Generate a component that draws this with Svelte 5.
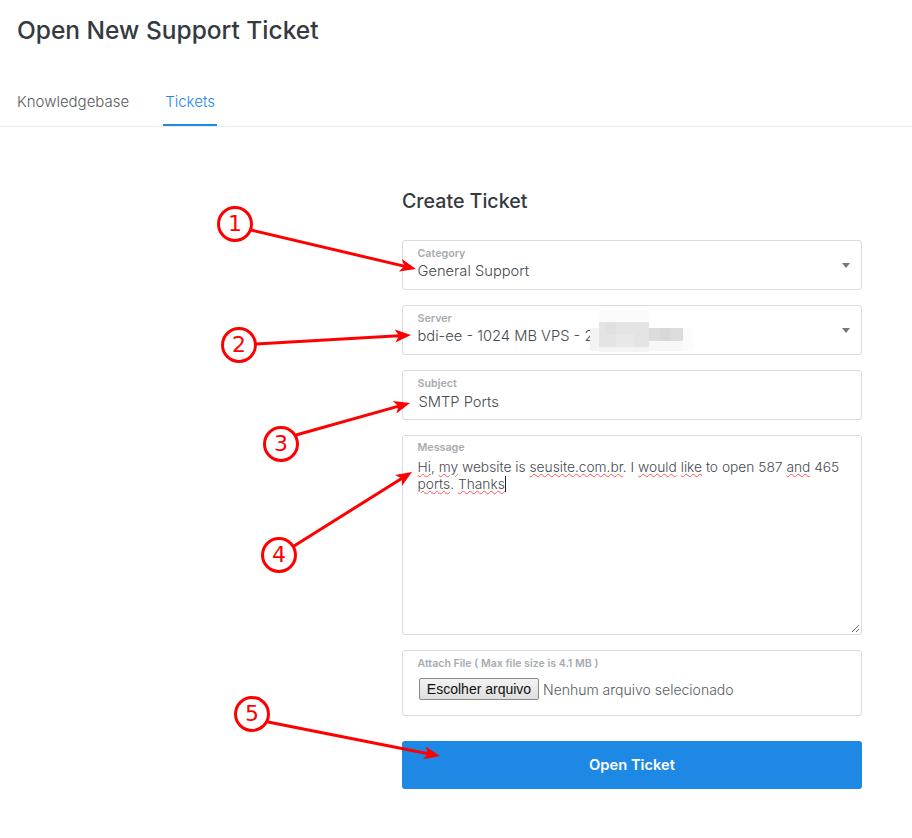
<script>
  const blur = [
    [590, 328, 9, 23, '#f3f3f3'], [599, 322, 50, 25, '#e4e4e4'], [599, 347, 50, 5, '#f4f4f4'],
    [599, 310, 50, 12, '#fbfbfb'], [606, 322, 10, 12, '#e0e0e0'], [616, 334, 18, 13, '#e8e8e8'],
    [649, 328, 34, 13, '#dcdcdc'], [660, 328, 10, 13, '#d8d8d8'], [649, 341, 34, 10, '#f7f7f7'],
    [683, 328, 10, 23, '#fbfbfb']
  ];

  const arrows = [
    { n: 1, cx: 235, cy: 224, x1: 251, y1: 230, x2: 416, y2: 269 },
    { n: 2, cx: 239, cy: 345, x1: 256, y1: 344, x2: 411, y2: 335 },
    { n: 3, cx: 281, cy: 444, x1: 296, y1: 435, x2: 410, y2: 403 },
    { n: 4, cx: 279, cy: 555, x1: 294, y1: 546, x2: 412, y2: 472 },
    { n: 5, cx: 252, cy: 714, x1: 268, y1: 722, x2: 440, y2: 756 }
  ];

  const angle = (a) => Math.atan2(a.y2 - a.y1, a.x2 - a.x1);

  // arrow head polygon, pointing along the line
  function head(a) {
    const ang = angle(a);
    const pt = (d, s) => {
      const x = a.x2 - d * Math.cos(ang) - s * Math.sin(ang);
      const y = a.y2 - d * Math.sin(ang) + s * Math.cos(ang);
      return `${x.toFixed(1)},${y.toFixed(1)}`;
    };
    return `${a.x2},${a.y2} ${pt(16, 6.5)} ${pt(12, 0)} ${pt(16, -6.5)}`;
  }
</script>

<div class="page">
  <header>
    <h1>Open New Support Ticket</h1>
    <nav>
      <a href="#kb">Knowledgebase</a>
      <a href="#tickets" class="active">Tickets</a>
    </nav>
  </header>

  <form on:submit|preventDefault>
    <h2>Create Ticket</h2>

    <div class="field select">
      <span class="label">Category</span>
      <span class="value">General Support</span>
      <i class="caret"></i>
    </div>

    <div class="field select">
      <span class="label">Server</span>
      <span class="value">bdi-ee - 1024 MB VPS - 2</span>
      <i class="caret"></i>
    </div>

    <div class="field subject">
      <span class="label">Subject</span>
      <span class="value">SMTP Ports</span>
    </div>

    <div class="field message">
      <span class="label">Message</span>
      <p>
        <u>Hi</u>, <u>my</u> website is <u>seusite.com.br</u>. I <u>would</u> <u>like</u> to open 587 <u>and</u> 465
        <u>ports</u>. <u>Thanks</u><b class="cursor"></b>
      </p>
      <svg class="grip" width="9" height="9" viewBox="0 0 9 9">
        <path d="M1 8 8 1M5 8 8 5" stroke="#666" fill="none" />
      </svg>
    </div>

    <div class="field attach">
      <span class="label">Attach File ( Max file size is 4.1 MB )</span>
      <div class="file">
        <button type="button">Escolher arquivo</button>
        <span>Nenhum arquivo selecionado</span>
      </div>
    </div>

    <button class="submit" type="submit">Open Ticket</button>
  </form>

  <svg class="overlay" width="912" height="838" viewBox="0 0 912 838">
    {#each blur as [x, y, w, h, fill]}
      <rect {x} {y} width={w} height={h} {fill} />
    {/each}
    {#each arrows as a}
      <line x1={a.x1} y1={a.y1} x2={a.x2 - 8 * Math.cos(angle(a))} y2={a.y2 - 8 * Math.sin(angle(a))} stroke="#f00" stroke-width="3" />
      <polygon points={head(a)} fill="#f00" />
      <circle cx={a.cx} cy={a.cy} r="16.5" fill="#fff" stroke="#f00" stroke-width="3" />
      <text x={a.cx} y={a.cy + 7} text-anchor="middle">{a.n}</text>
    {/each}
  </svg>
</div>

<style>
  :global(body) {
    margin: 0;
    background: #fff;
    font-family: "Inter", "Lato", sans-serif;
    color: #555b61;
  }

  .page { position: relative; height: 838px; overflow: hidden; }

  header { height: 126px; border-bottom: 1px solid #e9ecef; padding-left: 17px; }
  h1 {
    margin: 0; padding-top: 16px;
    font-size: 24.5px; line-height: 29px; font-weight: 500; color: #343a40;
  }

  nav { display: flex; gap: 34px; margin-top: 33px; }
  nav a {
    display: block; padding: 0 2px; height: 48px; line-height: 47px; margin-left: -2px;
    font-size: 15px; font-weight: 300; color: #555b61; text-decoration: none; box-sizing: border-box;
  }
  nav a.active { color: #1e88e5; border-bottom: 2px solid #1e88e5; }

  form { width: 460px; margin-left: 402px; display: flex; flex-direction: column; }
  h2 {
    margin: 61px 0 26px; font-size: 19.6px; line-height: 26px; font-weight: 500; color: #343a40;
  }

  .field {
    position: relative; height: 50px; box-sizing: border-box; margin-bottom: 15px;
    border: 1px solid #dcdcdc; border-radius: 3px; padding: 7px 15px 0 14.5px;
  }
  .label { display: block; font-size: 10.7px; line-height: 12px; font-weight: 600; color: #a7abb0; }
  .value { display: block; margin-top: 1px; font-size: 14.7px; line-height: 20px; font-weight: 300; color: #444a50; }
  .subject .value { margin-top: 2px; padding-left: 1px; }

  .caret {
    position: absolute; right: 11px; top: 22px;
    border-left: 4px solid transparent; border-right: 4px solid transparent; border-top: 5px solid #777;
  }

  .message { height: 200px; padding-top: 6px; }
  .message p { margin: 5px 0 0; font-size: 13.75px; line-height: 17px; font-weight: 300; width: 432px; color: #444a50; }
  .message u { text-decoration: underline wavy #f55 1px; text-underline-offset: 1px; }
  .cursor { display: inline-block; width: 1px; height: 16px; background: #222; vertical-align: -3px; }
  .grip { position: absolute; right: 1px; bottom: 1px; }

  .attach { height: 66px; margin-bottom: 25px; }
  .attach .label { line-height: 11px; font-size: 10.6px; }
  .file { display: flex; align-items: center; gap: 4px; margin-top: 9px; margin-left: 1.5px; }
  .file button {
    width: 120px; height: 22px; padding: 0; box-sizing: border-box;
    font-family: "Liberation Sans", Arial, sans-serif; font-size: 14px; color: #111;
    background: linear-gradient(#f3f3f3, #dedede); border: 1px solid #8a8a8a; border-radius: 2px;
  }
  .file span { font-size: 14px; font-weight: 300; color: #555b61; }

  .submit {
    height: 48px; border: 0; border-radius: 3px; background: #1e88e5; color: #fff;
    font-family: inherit; font-size: 14.7px; font-weight: 600; padding-bottom: 2px;
  }

  .overlay { position: absolute; left: 0; top: 0; pointer-events: none; }
  .overlay text { font-family: "DejaVu Sans", sans-serif; font-size: 22px; fill: #f00; }
</style>
